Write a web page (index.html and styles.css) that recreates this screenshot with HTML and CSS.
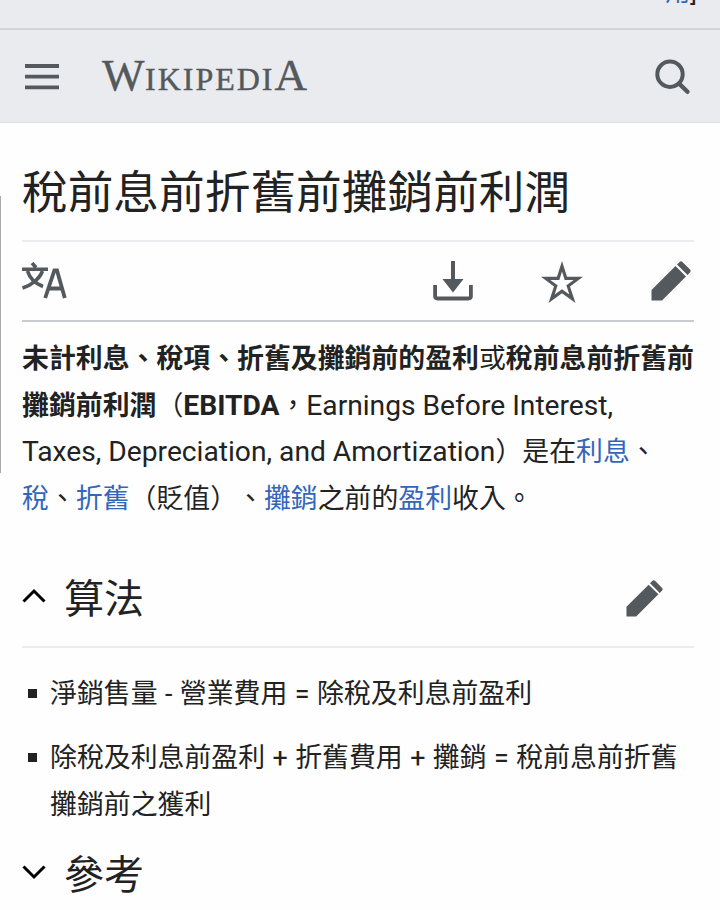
FILE: index.html
```html
<!DOCTYPE html>
<html lang="zh-Hant">
<head>
    <meta charset="UTF-8">
    <meta name="viewport" content="width=device-width, initial-scale=1.0">
    <title>稅前息前折舊前攤銷前利潤</title>
    <link rel="stylesheet" href="styles.css">
</head>
<body>
    <div class="banner"><a href="#">用</a>]</div>

    <header class="header">
        <svg class="menu" viewBox="0 0 34 26"><path d="M0 2h34M0 12.7h34M0 23.4h34" stroke="#54595d" stroke-width="3.8"/></svg>
        <div class="logo"><span class="big first">W</span><span class="small">IKIPEDI</span><span class="big">A</span></div>
        <svg class="search" viewBox="0 0 36 36" fill="none" stroke="#54595d"><circle cx="15" cy="15.2" r="12.7" stroke-width="4"/><path d="M24 24.5l8.5 8.3" stroke-width="4.4" stroke-linecap="round"/></svg>
    </header>

    <main class="content">
        <h1>稅前息前折舊前攤銷前利潤</h1>

        <nav class="actions">
            <svg class="language" viewBox="0 0 46 38" fill="none" stroke="#54595d" stroke-width="3.6"><path d="M0 7.3h26M10 1l4 4.500M5.500 9c2.500 8 7.500 12.500 15.500 15.500M20.500 9C17.500 17 9 23.500 .5 26"/><path d="M23.200 36L32.400 8.500h2.600L42.800 36M26.500 26.500h14" stroke-width="3.800"/></svg>
            <svg class="download" viewBox="0 0 40 40"><path d="M18 0h4v18h8.500L20 31.500 9.500 18H18z" fill="#54595d"/><path d="M2.100 24v11q0 2.500 2.500 2.500h30.800q2.500 0 2.500-2.500V24" fill="none" stroke="#54595d" stroke-width="3.800"/></svg>
            <svg class="star" viewBox="0 0 42 42"><path fill-rule="evenodd" d="M21 0l5 15.700h16L29 25.500 34.500 42 21 32.200 7.500 42 13 25.500 0 15.700h16zM21 10.500L18.300 19h-9l7.300 5.300-2.900 9.200 7.300-5.300 7.300 5.300-2.900-9.200 7.300-5.300h-9z" fill="#54595d"/></svg>
            <svg class="pencil" viewBox="0 0 40 40"><path d="M.500 39.500V29L24.500 5l10.500 10.500L11 39.500zM26 3.500l2.300-2.300q1.700-1.700 3.400 0l7.100 7.100q1.700 1.700 0 3.400L36.500 14z" fill="#54595d"/></svg>
        </nav>

        <p class="intro"><b>未計利息、稅項、折舊及攤銷前的盈利</b>或<b>稅前息前折舊前攤銷前利潤</b>（<b class="latin">EBITDA</b>，<span class="latin">Earnings Before Interest, Taxes, Depreciation, and Amortization</span>）是在<a href="#">利息</a>、<a href="#">稅</a>、<a href="#">折舊</a>（貶值）、<a href="#">攤銷</a>之前的<a href="#">盈利</a>收入。</p>

        <div class="section">
            <svg class="arrow" viewBox="0 0 24 16"><path d="M1.500 13.500L12 3l10.500 10.500" fill="none" stroke="#000" stroke-width="3"/></svg>
            <h2>算法</h2>
            <svg class="pencil small-pencil" viewBox="0 0 40 40"><path d="M.500 39.500V29L24.500 5l10.500 10.500L11 39.500zM26 3.500l2.300-2.300q1.700-1.700 3.400 0l7.100 7.100q1.700 1.700 0 3.400L36.500 14z" fill="#54595d"/></svg>
        </div>
        <ul>
            <li>淨銷售量 - 營業費用 = 除稅及利息前盈利</li>
            <li>除稅及利息前盈利 + 折舊費用 + 攤銷 = 稅前息前折舊攤銷前之獲利</li>
        </ul>
        <div class="section closed">
            <svg class="arrow" viewBox="0 0 24 16"><path d="M1.500 2.500L12 13 22.500 2.500" fill="none" stroke="#000" stroke-width="3"/></svg>
            <h2>參考</h2>
        </div>
    </main>
    <div class="edge"></div>
</body>
</html>
```

FILE: styles.css
```css
* {
    box-sizing: border-box;
}
body {
    margin: 0;
    height: 910px;
    overflow: hidden;
    position: relative;
    background: #fefefe;
    color: #222;
    font-family: Roboto, "Noto Sans CJK TC", sans-serif;
    font-size: 26.88px;
    line-height: 46.6px;
    text-spacing-trim: space-all;
}
a {
    color: #3366bb;
    text-decoration: none;
}
svg {
    display: block;
    flex: none;
}
.banner {
    display: flex;
    justify-content: flex-end;
    align-items: flex-end;
    height: 30px;
    padding: 0 23px 20px 0;
    background: #eaebef;
    border-bottom: 2px solid #d1d3d7;
    font-size: 25px;
    line-height: 30px;
    overflow: hidden;
}
.header {
    display: flex;
    align-items: center;
    height: 93px;
    padding: 0 29px 0 25px;
    background: #eaebef;
    border-bottom: 1px solid #dfe0e3;
}
.menu {
    width: 34px;
    height: 26px;
    margin-top: 2px;
}
.logo {
    margin: 5px 0 0 43px;
    color: #54595d;
    font-family: "Liberation Serif", serif;
    white-space: nowrap;
    -webkit-text-stroke: .4px #54595d;
}
.big {
    font-size: 45px;
}
.first {
    letter-spacing: .5px;
}
.small {
    font-size: 32px;
    letter-spacing: 2px;
}
.search {
    width: 36px;
    height: 36px;
    margin: 2px 0 0 auto;
}
.content {
    padding: 0 26px 0 22px;
}
h1 {
    margin: 0;
    height: 119px;
    padding-top: 37px;
    border-bottom: 2px solid #eaecf0;
    font-size: 45.7px;
    font-weight: 400;
    line-height: 68px;
}
.actions {
    display: flex;
    align-items: center;
    height: 80px;
    padding-right: 3px;
    border-bottom: 2px solid #c8ccd1;
}
.language {
    width: 46px;
    height: 38px;
    margin: -1px auto 0 0;
}
.download {
    width: 40px;
    height: 40px;
}
.star {
    width: 42px;
    height: 42px;
    margin: 1px 68px 0;
}
.pencil {
    width: 40px;
    height: 40px;
}
.intro {
    margin: 14px -4px 0 0;
}
.latin {
    font-size: 28.2px;
    line-height: 1;
}
.section {
    display: flex;
    align-items: center;
    height: 98px;
    margin-top: 28px;
    border-bottom: 2px solid #eaecf0;
}
.arrow {
    width: 24px;
    height: 16px;
    margin-top: -4px;
}
h2 {
    margin: 3px 0 0 18px;
    font-size: 40px;
    font-weight: 400;
    line-height: 60px;
}
.small-pencil {
    width: 37px;
    height: 37px;
    margin: 0 31px 0 auto;
}
ul {
    margin: 23px 0 0;
    padding: 0;
    list-style: none;
}
li {
    position: relative;
    padding-left: 28px;
    margin: 0 -4px 17px 0;
    word-spacing: .8px;
}
li:last-child {
    margin-bottom: 0;
}
li::before {
    content: "";
    position: absolute;
    left: 6px;
    top: 18px;
    width: 9px;
    height: 9px;
    background: #222;
}
.closed {
    margin-top: -3px;
    border-bottom: 0;
}
/* scroll handle on the left edge */
.edge {
    position: absolute;
    left: 0;
    top: 196px;
    width: 1px;
    height: 277px;
    background: #aaa;
}
```
